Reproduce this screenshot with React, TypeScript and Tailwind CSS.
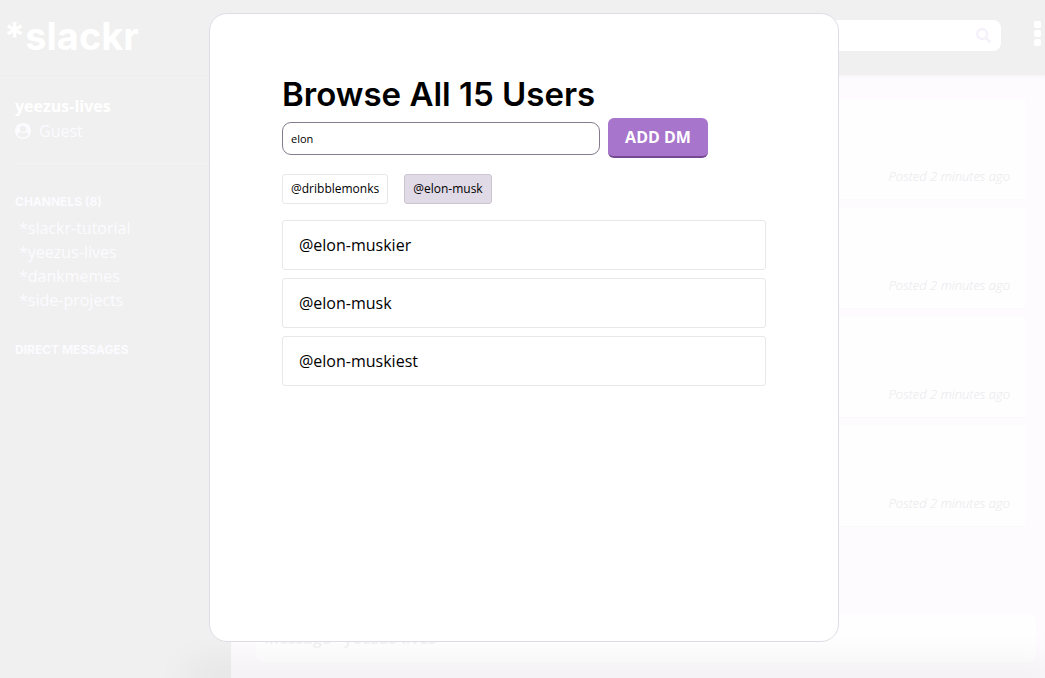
import { useState } from "react";
import { FaSearch } from "react-icons/fa";

const channels = ["slackr-tutorial", "yeezus-lives", "dankmemes", "side-projects"];
const posts = [1, 2, 3, 4];
const users = ["elon-muskier", "elon-musk", "elon-muskiest"];

function GuestIcon() {
  return (
    <svg viewBox="0 0 16 16" className="size-4" aria-hidden="true">
      <circle cx="8" cy="8" r="8" fill="currentColor" />
      <circle cx="8" cy="6" r="3.2" fill="#f0f0f0" />
      <path d="M2.600 11.800C3 10 3.900 9 5 8.900c1.700 1.600 4.300 1.600 6 0 1.100.1 2 1.100 2.400 2.900a6.600 6.600 0 0 1-10.800 0z" fill="#f0f0f0" />
    </svg>
  );
}

function Header() {
  return (
    <header className="flex h-[75px] items-start justify-between bg-[#f0f0f0] pt-5 pr-1">
      <h1 className="-mt-2 pl-1 font-[Inter,sans-serif] text-[38px] leading-12 font-bold text-white">*slackr</h1>
      <div className="flex items-start gap-[33px]">
        <label className="flex h-[31px] w-80 items-center rounded-lg bg-white">
          <input aria-label="Search" type="search" className="min-w-0 flex-1 bg-transparent px-3 text-sm outline-none" />
          <FaSearch className="mr-2.5 size-[15px] text-[#f5f1fa]" />
        </label>
        <button aria-label="Menu" className="flex flex-col gap-0.5 pt-px">
          <span className="size-[7px] rounded-xs bg-white" />
          <span className="size-[7px] rounded-xs bg-white" />
          <span className="size-[7px] rounded-xs bg-white" />
        </button>
      </div>
    </header>
  );
}

function Sidebar() {
  return (
    <aside className="w-[231px] shrink-0 border-t border-[#ededed] bg-[#f0f0f0] pl-[15px] text-[#fcfbff]">
      <div className="border-b border-[#f3f3f3] pt-[18px] pb-5">
        <h2 className="text-base leading-6 font-bold text-white">yeezus-lives</h2>
        <p className="flex items-center gap-2 pt-px text-base leading-6 font-medium">
          <GuestIcon />
          Guest
        </p>
      </div>
      <h3 className="pt-7 pb-1 font-[Inter,sans-serif] text-xs leading-5 font-bold">CHANNELS (8)</h3>
      <ul className="pl-1">
        {channels.map((name) => (
          <li key={name} className="text-base leading-6 font-medium">
            <a href={"#" + name}>*{name}</a>
          </li>
        ))}
      </ul>
      <h3 className="pt-7 font-[Inter,sans-serif] text-xs leading-5 font-bold">DIRECT MESSAGES</h3>
    </aside>
  );
}

function Feed() {
  return (
    <main className="flex flex-1 flex-col justify-between bg-[#fdfbfe] shadow-[inset_0_4px_4px_-2px_#f6f5f8]">
      <ul className="flex flex-col gap-2 pt-6 pr-5 pl-[25px]">
        {posts.map((id) => (
          <li key={id} className="flex h-[101px] items-end justify-end border-b border-[#fafafa] bg-[#fefefe] px-[15px] pb-[13px]">
            <p className="text-[13px] leading-5 font-light text-[#e8e8eb] italic">Posted 2 minutes ago</p>
          </li>
        ))}
      </ul>
      <div className="pr-[9px] pb-4 pl-[25px]">
        <input
          aria-label="Message"
          placeholder="Message *yeezus-lives"
          className="h-12 w-full rounded-lg bg-[#fefefe] px-2 text-base font-semibold outline-none placeholder:text-[#f1f1f2]"
        />
      </div>
    </main>
  );
}

function UserDialog() {
  const [query, setQuery] = useState("elon");
  return (
    <div role="dialog" aria-labelledby="dialog-title" className="absolute inset-0 pt-[13px]">
      <div className="ml-[20%] box-content h-[627px] w-[60%] rounded-[18px] border border-[#dfdce5] bg-white pr-px">
        <div className="px-[72px] pt-14 text-black">
          <h2 id="dialog-title" className="font-[Inter,sans-serif] text-[33px] leading-12 font-semibold whitespace-nowrap">
            Browse All 15 Users
          </h2>
          <form className="flex items-center gap-2" onSubmit={(e) => e.preventDefault()}>
            <input
              aria-label="Find users"
              value={query}
              onChange={(e) => setQuery(e.target.value)}
              className="h-[33px] w-[318px] rounded-[9px] border border-[#847b8c] bg-white px-2 text-[11px] outline-none"
            />
            <button className="h-10 w-[100px] rounded-md border-b-2 border-[#744992] bg-[#a875cd] text-base font-bold text-white">
              ADD DM
            </button>
          </form>
          <div className="mt-4 flex gap-4">
            <button className="h-[30px] rounded-[3px] border border-[#e8e8e8] bg-white px-2 text-xs">@dribblemonks</button>
            <button className="h-[30px] rounded-[3px] border border-[#cdc5d3] bg-[#e0dae6] px-2 text-xs">@elon-musk</button>
          </div>
          <ul className="mt-4 -mr-px flex flex-col gap-2">
            {users.filter((name) => name.includes(query)).map((name) => (
              <li key={name}>
                <button className="h-[50px] w-full rounded-[3px] border border-[#e8e8e8] px-4 text-left text-base">@{name}</button>
              </li>
            ))}
          </ul>
        </div>
      </div>
    </div>
  );
}

export default function App() {
  return (
    <div className="relative flex min-h-screen flex-col overflow-hidden bg-[#f0f0f0] font-['Open_Sans',sans-serif]">
      <Header />
      <div className="flex flex-1">
        <Sidebar />
        <Feed />
      </div>
      <div className="pointer-events-none absolute right-0 bottom-0 left-[200px] shadow-[0_0_36px_14px_rgba(0,0,0,0.06)]" />
      <UserDialog />
    </div>
  );
}
